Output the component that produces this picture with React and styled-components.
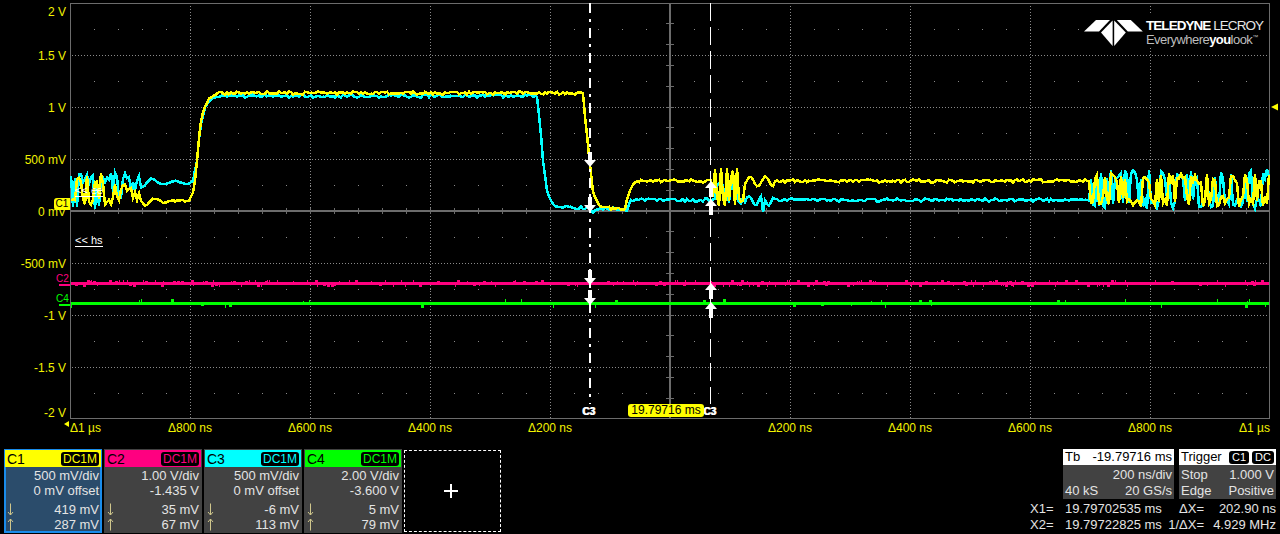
import styled, { createGlobalStyle } from "styled-components";

const GlobalStyle = createGlobalStyle`
  html, body {
    margin: 0;
    background: #000;
    overflow: hidden;
  }
  body {
    font-family: "Liberation Sans", Arial, sans-serif;
  }
`;

const YELLOW = "#ffff00";
const PINK = "#ff0080";
const CYAN = "#00ffff";
const GREEN = "#00ff00";
const GRID = "#8a8a8a";
const AXIS = "#6c6c6c";

const TOP = 3;
const BOTTOM = 418;
const LEFT = 70;
const RIGHT = 1269;
const MID_X = 670;
const MID_Y = 211;

const seeded = (seed) => () => {
  seed = (seed + 0x6d2b79f5) | 0;
  let t = Math.imul(seed ^ (seed >>> 15), 1 | seed);
  t = (t + Math.imul(t ^ (t >>> 7), 61 | t)) ^ t;
  return ((t ^ (t >>> 14)) >>> 0) / 4294967296;
};

const interpolate = (keys, x) => {
  for (let i = 1; i < keys.length; i++) {
    if (x <= keys[i][0]) {
      const [x0, y0] = keys[i - 1];
      const [x1, y1] = keys[i];
      return y0 + ((y1 - y0) * (x - x0)) / (x1 - x0);
    }
  }
  return keys[keys.length - 1][1];
};

// noise that flips between a low and a high rail, like the reference bursts
const makeWild = (rand) => {
  let high = false;
  return (lo, hi) => {
    if (rand() < 0.42) high = !high;
    return high ? lo + rand() * 11 : hi - rand() * 11;
  };
};

const yellowKeys = [
  [190, 200], [194, 190], [197, 160], [200, 125], [204, 108], [210, 98], [216, 93],
  [583, 93], [584, 107], [586, 125], [588, 147], [590.7, 170], [592, 190], [598, 203],
  [603, 208], [625, 209], [626, 211], [627, 198], [632, 185], [638, 181], [712, 181],
];
const cyanKeys = [
  [190, 182], [193, 180], [197, 160], [200, 128], [204, 110], [210, 100], [216, 96],
  [537, 96], [540, 123], [543, 160], [547, 190], [552, 203], [558, 207], [590, 208],
  [592, 214], [600, 208], [623, 209], [627, 212], [630, 200], [712, 200],
];

const buildYellow = () => {
  const rand = seeded(11);
  const wild = makeWild(rand);
  const pts = [];
  for (let x = LEFT + 1; x <= RIGHT; x += 2) {
    let y;
    if (x < 112) y = wild(173, 206);
    else if (x < 140) y = wild(184, 206);
    else if (x < 190) y = 200 + Math.sin(x / 3.2) * Math.max(0, (176 - x) / 7) + rand() * 2;
    else if (x < 712) y = interpolate(yellowKeys, x) + (rand() - 0.5) * 3;
    else if (x < 745) y = wild(168, 206);
    else if (x < 775) y = 181 + Math.sin(x / 2.4) * 5 + rand();
    else if (x < 1090) y = 181 + (rand() - 0.5) * 3;
    else y = wild(173, 207);
    pts.push(`${x},${y.toFixed(1)}`);
  }
  return pts.join(" ");
};

const buildCyan = () => {
  const rand = seeded(29);
  const wild = makeWild(rand);
  const pts = [];
  for (let x = LEFT + 1; x <= RIGHT; x += 2) {
    let y;
    if (x < 110) y = wild(174, 210);
    else if (x < 140) y = wild(172, 200);
    else if (x < 190) y = 182 + Math.sin(x / 3.6) * Math.max(1.5, (178 - x) / 7) + rand();
    else if (x < 712) y = interpolate(cyanKeys, x) + (rand() - 0.5) * 3;
    else if (x < 745) y = wild(177, 207);
    else if (x < 775) y = x > 761 && x < 765 ? 212 : 200 + Math.sin(x / 2.1) * 5 + rand();
    else if (x < 1090) y = 200 + (rand() - 0.5) * 3;
    else y = wild(169, 209);
    pts.push(`${x},${y.toFixed(1)}`);
  }
  return pts.join(" ");
};

// flat channel: a 3px band with small blocks sticking out of it
const buildBand = (seed, top, chance, reach) => {
  const rand = seeded(seed);
  let d = `M${LEFT + 1} ${top}H${RIGHT}v3H${LEFT + 1}z`;
  for (let x = LEFT + 1; x < RIGHT - 3; x += 2) {
    if (rand() < chance) {
      const w = rand() < 0.5 ? 1 : 3;
      const h = 1 + Math.floor(rand() * reach);
      const y = rand() < 0.55 ? top - h : top + 3;
      d += `M${x} ${y}h${w}v${h}h${-w}z`;
    }
  }
  return d;
};

const range = (from, to, step) => {
  const out = [];
  for (let v = from; v <= to + 0.01; v += step) out.push(v);
  return out;
};

const hLines = [55, 107, 159, 263, 315, 367];
const vLines = [190, 310, 430, 550, 790, 910, 1030, 1150];
const sparseRows = [29, 81, 133, 185, 237, 289, 341, 393];

const DownArrow = ({ x, tip }) => (
  <g fill="#fff">
    <rect x={x - 2} y={tip - 15} width="4" height="9" />
    <polygon points={`${x - 6},${tip - 7} ${x + 6},${tip - 7} ${x},${tip}`} />
  </g>
);

const UpArrow = ({ x, tip }) => (
  <g fill="#fff">
    <rect x={x - 2} y={tip + 6} width="4" height="10" />
    <polygon points={`${x - 6},${tip + 7} ${x + 6},${tip + 7} ${x},${tip}`} />
  </g>
);

const Graticule = () => (
  <PlotSvg viewBox={`${LEFT} ${TOP} 1210 416`}>
    <g stroke={GRID} strokeWidth="1" strokeDasharray="1 2" shapeRendering="crispEdges">
      {hLines.map((y) => (
        <line key={y} x1={LEFT + 2} x2={RIGHT} y1={y + 0.5} y2={y + 0.5} />
      ))}
      {vLines.map((x) => (
        <line key={x} x1={x + 0.5} x2={x + 0.5} y1={TOP} y2={BOTTOM} />
      ))}
    </g>
    <g fill={GRID}>
      {sparseRows.map((y) =>
        range(94, 1246, 24).map((x) => <rect key={`${x}-${y}`} x={x} y={y} width="1" height="1" />)
      )}
    </g>
    <g stroke={AXIS} shapeRendering="crispEdges" fill="none">
      <rect x={LEFT + 0.5} y={TOP + 0.5} width={RIGHT - LEFT} height={BOTTOM - TOP} strokeWidth="1.4" />
      <line x1={LEFT} x2={RIGHT} y1={MID_Y} y2={MID_Y} strokeWidth="1.4" />
      <line x1={MID_X} x2={MID_X} y1={TOP} y2={BOTTOM} strokeWidth="1.4" />
      {range(94, 1246, 24).map((x) => (
        <line key={x} x1={x} x2={x} y1={MID_Y - 3} y2={MID_Y + 3} />
      ))}
      {range(MID_Y - 20.8 * 9, MID_Y + 20.8 * 9, 20.8).map((y) => (
        <line key={y} x1={MID_X - 4} x2={MID_X + 4} y1={y} y2={y} />
      ))}
    </g>
    <g shapeRendering="crispEdges">
      <path d={buildBand(5, 282, 0.3, 2)} fill={PINK} />
      <path d={buildBand(7, 302, 0.07, 3)} fill={GREEN} />
    </g>
    <g fill="none" shapeRendering="crispEdges" strokeLinejoin="miter">
      <polyline points={buildCyan()} stroke={CYAN} strokeWidth="2.5" />
      <polyline points={buildYellow()} stroke={YELLOW} strokeWidth="2.5" />
    </g>
    <g stroke="#fff" shapeRendering="crispEdges">
      <line x1="590" x2="590" y1={TOP} y2="404" strokeWidth="2" strokeDasharray="10 6 3 6" />
      <line x1="710.5" x2="710.5" y1={TOP} y2="404" strokeWidth="1" strokeDasharray="18 6" />
    </g>
    <DownArrow x={590} tip={167} />
    <DownArrow x={590} tip={212} />
    <DownArrow x={590} tip={285} />
    <DownArrow x={590} tip={305} />
    <UpArrow x={711} tip={181} />
    <UpArrow x={711} tip={199} />
    <UpArrow x={711} tip={283} />
    <UpArrow x={711} tip={302} />
    <polygon points="1271,107 1278,103.5 1278,110.5" fill={YELLOW} />
  </PlotSvg>
);

const LogoMark = () => (
  <svg width="66" height="34" viewBox="0 0 66 34" fill="#fff">
    <polygon points="4,17.5 16,6 30,6 19,17.5" />
    <polygon points="62.8,17.5 50.8,6 36.8,6 47.8,17.5" />
    <polygon points="21,18.5 32.6,6.5 32.6,32" />
    <polygon points="45.8,18.5 34.2,6.5 34.2,32" />
  </svg>
);

const UpDown = ({ down }) => (
  <svg width="7" height="13" viewBox="0 0 7 13" stroke="#cfc68c" fill="none">
    {down ? (
      <path d="M3.5 0.5V12M1 9l2.5 3L6 9" />
    ) : (
      <path d="M3.5 12.5V1M1 4l2.5-3L6 4" />
    )}
  </svg>
);

const channels = [
  { name: "C1", color: YELLOW, scale: "500 mV/div", offset: "0 mV offset", down: "419 mV", up: "287 mV", selected: true },
  { name: "C2", color: PINK, scale: "1.00 V/div", offset: "-1.435 V", down: "35 mV", up: "67 mV" },
  { name: "C3", color: CYAN, scale: "500 mV/div", offset: "0 mV offset", down: "-6 mV", up: "113 mV" },
  { name: "C4", color: GREEN, scale: "2.00 V/div", offset: "-3.600 V", down: "5 mV", up: "79 mV" },
];

const yTicks = ["2 V", "1.5 V", "1 V", "500 mV", "0 mV", "-500 mV", "-1 V", "-1.5 V", "-2 V"];
const xTicks = ["Δ1 µs", "Δ800 ns", "Δ600 ns", "Δ400 ns", "Δ200 ns", "", "Δ200 ns", "Δ400 ns", "Δ600 ns", "Δ800 ns", "Δ1 µs"];

const App = () => {
  return (
    <Screen>
      <GlobalStyle />
      <Scope>
        <YAxis>
          {yTicks.map((t) => (
            <YTick key={t}>{t}</YTick>
          ))}
        </YAxis>
        <Plot>
          <Graticule />
          <Logo>
            <LogoMark />
            <LogoText>
              <Brand>
                <b>TELEDYNE</b> LECROY
              </Brand>
              <Tagline>
                Everywhere<b>you</b>look<sup>™</sup>
              </Tagline>
            </LogoText>
          </Logo>
          <ChannelFlag>C1</ChannelFlag>
          <ZoomHint $top={231}>&lt;&lt; hs</ZoomHint>
          <ZoomHint $top={181}>&lt;&lt; ee</ZoomHint>
          <ChannelMark $color={PINK} $top={273}>C2</ChannelMark>
          <ChannelMark $color={GREEN} $top={293}>C4</ChannelMark>
          <CursorTag $left={582}>C3</CursorTag>
          <CursorTag $left={703}>C3</CursorTag>
          <TimeFlag>19.79716 ms</TimeFlag>
        </Plot>
      </Scope>
      <XAxis>
        {xTicks.map((t, i) => (
          <XTick key={i}>{t}</XTick>
        ))}
      </XAxis>
      <Footer>
        <Cards>
          {channels.map((c) => (
            <Card key={c.name} $selected={c.selected}>
              <CardHead $color={c.color}>
                {c.name}
                <Coupling $color={c.color}>DC1M</Coupling>
              </CardHead>
              <CardLine>{c.scale}</CardLine>
              <CardLine>{c.offset}</CardLine>
              <CardLine $spaced>
                <ArrowSlot>
                  <UpDown down />
                </ArrowSlot>
                {c.down}
              </CardLine>
              <CardLine>
                <ArrowSlot>
                  <UpDown />
                </ArrowSlot>
                {c.up}
              </CardLine>
            </Card>
          ))}
          <AddBox>
            <svg width="14" height="14" viewBox="0 0 14 14" stroke="#fff" strokeWidth="2">
              <line x1="0" x2="14" y1="7" y2="7" />
              <line x1="7" x2="7" y1="0" y2="14" />
            </svg>
          </AddBox>
        </Cards>
        <Status>
          <Panels>
            <Panel $width={111}>
              <PanelHead>
                <span>Tb</span>
                <span>-19.79716 ms</span>
              </PanelHead>
              <PanelRow>
                <span />
                <span>200 ns/div</span>
              </PanelRow>
              <PanelRow>
                <span>40 kS</span>
                <span>20 GS/s</span>
              </PanelRow>
            </Panel>
            <Panel $width={97}>
              <PanelHead>
                <span>Trigger</span>
                <TagGroup>
                  <TrigTag>C1</TrigTag>
                  <TrigTag>DC</TrigTag>
                </TagGroup>
              </PanelHead>
              <PanelRow>
                <span>Stop</span>
                <span>1.000 V</span>
              </PanelRow>
              <PanelRow>
                <span>Edge</span>
                <span>Positive</span>
              </PanelRow>
            </Panel>
          </Panels>
          <Readouts>
            <span>X1=</span>
            <span>19.79702535 ms</span>
            <ReadRight>ΔX=</ReadRight>
            <ReadRight>202.90 ns</ReadRight>
            <span>X2=</span>
            <span>19.79722825 ms</span>
            <ReadRight>1/ΔX=</ReadRight>
            <ReadRight>4.929 MHz</ReadRight>
          </Readouts>
        </Status>
      </Footer>
    </Screen>
  );
};

export default App;

const Screen = styled.div`
  width: 1280px;
  height: 534px;
  background: #000;
  overflow: hidden;
  display: flex;
  flex-direction: column;
`;

const Scope = styled.div`
  display: flex;
  height: 416px;
  padding-top: 3px;
`;

const YAxis = styled.div`
  width: 66px;
  padding-right: 4px;
  padding-top: 1px;
  display: flex;
  flex-direction: column;
  align-items: flex-end;
  color: #f2f200;
  font-size: 12px;
`;

const YTick = styled.div`
  height: 16px;
  line-height: 16px;
  margin-bottom: 36px;
  white-space: nowrap;
  &:first-child {
    margin-bottom: 28px;
  }
  &:nth-last-child(2) {
    margin-bottom: 29px;
  }
  &:last-child {
    margin-bottom: 0;
  }
`;

const Plot = styled.div`
  position: relative;
  width: 1210px;
  height: 416px;
`;

const PlotSvg = styled.svg`
  display: block;
  width: 1210px;
  height: 416px;
`;

const Logo = styled.div`
  position: absolute;
  left: 1010px;
  top: 11px;
  display: flex;
  background: #000;
`;

const LogoText = styled.div`
  padding-top: 5px;
  color: #fff;
  white-space: nowrap;
`;

const Brand = styled.div`
  font-size: 13.5px;
  line-height: 14px;
  letter-spacing: -0.95px;
  color: #e6e6e6;
  b {
    color: #fff;
  }
`;

const Tagline = styled.div`
  font-size: 13px;
  line-height: 14px;
  letter-spacing: -0.55px;
  color: #bdbdbd;
  b {
    color: #fff;
  }
  sup {
    font-size: 6px;
    line-height: 0;
  }
`;

const ChannelFlag = styled.div`
  position: absolute;
  left: -16px;
  top: 195px;
  width: 16px;
  height: 12px;
  line-height: 12px;
  background: ${YELLOW};
  border-radius: 3px 0 0 3px;
  color: #000;
  font-size: 10px;
  text-align: center;
`;

const ZoomHint = styled.div`
  position: absolute;
  left: 5px;
  top: ${(p) => p.$top}px;
  color: #fff;
  font-size: 11px;
  line-height: 12px;
  border-bottom: 1px solid #fff;
`;

const ChannelMark = styled.div`
  position: absolute;
  left: -14px;
  top: ${(p) => p.$top - 3}px;
  width: 14px;
  color: ${(p) => p.$color};
  font-size: 10px;
  line-height: 11px;
  &::after {
    content: "";
    display: block;
    margin-left: 3px;
    height: 2px;
    background: ${(p) => p.$color};
  }
`;

const CursorTag = styled.div`
  position: absolute;
  left: ${(p) => p.$left - 70}px;
  top: 403px;
  color: #fff;
  font-size: 10px;
  font-weight: bold;
  line-height: 12px;
  letter-spacing: 0;
  text-shadow: 1px 0 0 #fff;
`;

const TimeFlag = styled.div`
  position: absolute;
  left: 558px;
  top: 401px;
  width: 76px;
  height: 13px;
  line-height: 13px;
  background: ${YELLOW};
  border-radius: 3px;
  color: #000;
  font-size: 12px;
  text-align: center;
  white-space: nowrap;
`;

const XAxis = styled.div`
  height: 29px;
  padding-top: 1px;
  padding-left: 70px;
  display: grid;
  grid-template-columns: 60px repeat(9, 120px) 60px;
  color: #f2f200;
  font-size: 12px;
  line-height: 16px;
`;

const XTick = styled.div`
  text-align: center;
  white-space: nowrap;
  &:first-child {
    position: relative;
    text-align: left;
  }
  &:first-child::before {
    content: "";
    position: absolute;
    left: -6px;
    top: 1px;
    border-style: solid;
    border-width: 3px 5px 3px 0;
    border-color: transparent ${YELLOW} transparent transparent;
  }
  &:last-child {
    text-align: right;
  }
`;

const Footer = styled.div`
  height: 85px;
  padding-left: 4px;
  display: flex;
  justify-content: space-between;
`;

const Cards = styled.div`
  display: flex;
  gap: 2px;
  height: 84px;
`;

const Card = styled.div`
  width: 98px;
  box-sizing: border-box;
  background: ${(p) => (p.$selected ? "#2b4c6b" : "#424242")};
  box-shadow: ${(p) => (p.$selected ? "inset 0 0 0 2px #1a8ceb" : "none")};
  color: #e4e4e4;
  font-size: 13px;
`;

const CardHead = styled.div`
  height: 17px;
  margin: 1px 1px 0;
  padding-left: 2px;
  display: flex;
  align-items: center;
  justify-content: space-between;
  background: ${(p) => p.$color};
  color: #000;
  font-size: 14px;
`;

const Coupling = styled.span`
  height: 14px;
  line-height: 14px;
  padding: 0 2px;
  margin-right: 2px;
  background: #000;
  border-radius: 3px;
  color: ${(p) => p.$color};
  font-size: 12px;
`;

const CardLine = styled.div`
  height: 15px;
  line-height: 15px;
  padding: 0 3px 0 3px;
  margin-top: ${(p) => (p.$spaced ? "4px" : "0")};
  display: flex;
  justify-content: flex-end;
  white-space: nowrap;
  &:nth-child(2) {
    margin-top: 1px;
  }
`;

const ArrowSlot = styled.span`
  margin-right: auto;
  display: flex;
  align-items: center;
`;

const AddBox = styled.div`
  width: 97px;
  height: 82px;
  margin-top: 1px;
  padding-right: 3px;
  box-sizing: border-box;
  border: 1px dashed #fff;
  display: flex;
  align-items: center;
  justify-content: center;
`;

const Status = styled.div`
  width: 250px;
  display: flex;
  flex-direction: column;
`;

const Panels = styled.div`
  height: 50px;
  margin-left: 33px;
  display: flex;
  gap: 5px;
`;

const Panel = styled.div`
  width: ${(p) => p.$width}px;
  background: #424242;
  color: #e4e4e4;
  font-size: 13px;
  white-space: nowrap;
`;

const PanelHead = styled.div`
  height: 16px;
  line-height: 16px;
  padding: 0 2px;
  display: flex;
  justify-content: space-between;
  align-items: center;
  background: #fff;
  color: #000;
`;

const PanelRow = styled.div`
  height: 16px;
  line-height: 16px;
  padding: 0 2px;
  display: flex;
  justify-content: space-between;
  &:nth-child(2) {
    margin-top: 2px;
  }
`;

const TagGroup = styled.span`
  display: flex;
  gap: 3px;
`;

const TrigTag = styled.span`
  height: 13px;
  line-height: 13px;
  padding: 0 3px;
  background: #000;
  border-radius: 3px;
  color: #fff;
  font-size: 11px;
`;

const Readouts = styled.div`
  margin-top: 2px;
  padding-right: 4px;
  display: grid;
  grid-template-columns: 35px 100px 39px 1fr;
  grid-auto-rows: 16px;
  line-height: 16px;
  color: #e4e4e4;
  font-size: 13px;
  white-space: nowrap;
`;

const ReadRight = styled.span`
  text-align: right;
`;
